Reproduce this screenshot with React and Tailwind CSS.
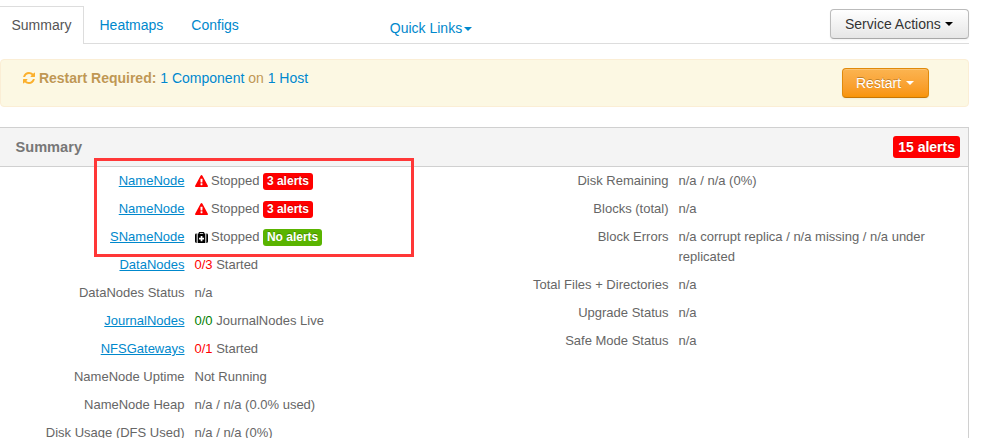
import React from "react";

const Refresh = () => (
  <svg className="inline-block h-3 w-3 fill-[#fbb02d] align-[-1px]" viewBox="0 0 1536 1536">
    <path d="M1511 928q0 5-1 7-64 268-268 434.5T764 1536q-146 0-282.5-55T238 1324l-129 129q-19 19-45 19t-45-19-19-45V960q0-26 19-45t45-19h448q26 0 45 19t19 45-19 45l-137 137q71 66 161 102t187 36q134 0 250-65t186-179q11-17 53-117 8-23 30-23h192q13 0 22.5 9.5t9.5 22.5zm25-800v448q0 26-19 45t-45 19h-448q-26 0-45-19t-19-45 19-45l138-138Q969 256 768 256q-134 0-250 65T332 500q-11 17-53 117-8 23-30 23H50q-13 0-22.5-9.5T18 608v-7q65-268 270-434.5T768 0q146 0 284 55.5T1297 212l130-129q19-19 45-19t45 19 19 45z" />
  </svg>
);

const Warning = () => (
  <svg className="block h-3 w-[13px] fill-[#ff0000]" viewBox="0 0 1792 1664">
    <path d="M1024 1375v-190q0-14-9.5-23.5T992 1152H800q-13 0-22.5 9.5T768 1185v190q0 14 9.5 23.5t22.5 9.5h192q13 0 22.5-9.5t9.5-23.5zm-2-374l18-459q0-12-10-19-13-11-24-11H786q-11 0-24 11-10 7-10 21l17 457q0 10 10 16.5t24 6.5h185q14 0 23.5-6.5t10.5-16.5zm-14-934l768 1408q35 63-2 126-17 29-46.5 46t-63.5 17H128q-34 0-63.5-17T18 1601q-37-63-2-126L784 67q17-31 47-49t65-18 65 18 47 49z" />
  </svg>
);

const Medkit = () => (
  <svg className="block h-[11px] w-[13px] fill-black" viewBox="0 0 13 11">
    <path d="M1.7 1.6v9.4h-.3Q0 11 0 9.6V3Q0 1.6 1.4 1.6zM11.3 1.6v9.4h.3Q13 11 13 9.6V3q0-1.4-1.4-1.4z" />
    <path
      fillRule="evenodd"
      d="M2.7 11V1.6h1V.8q0-.8.8-.8h4q.8 0 .8.8v.8h1V11zM4.8 1v.8h3.4V1zM5.7 4v1.7H4v1.8h1.7v1.7h1.7V7.5H9V5.7H7.4V4z"
    />
  </svg>
);

const Caret = ({ className }) => (
  <span className={`inline-block border-x-4 border-t-4 border-x-transparent ${className}`} />
);

const Badge = ({ className, children }) => (
  <span
    className={`rounded-[3px] font-bold text-white [text-shadow:0_-1px_0_rgba(0,0,0,0.25)] ${className}`}
  >
    {children}
  </span>
);

const Stopped = ({ icon, tone, alerts }) => (
  <div className="flex items-center">
    <span className="w-[16.5px]">{icon}</span>
    <span>Stopped</span>
    <Badge className={`ml-[3.5px] mt-px h-[17px] px-1 text-xs leading-[16px] ${tone}`}>{alerts}</Badge>
  </div>
);

const left = [
  { label: "NameNode", link: true, value: <Stopped icon={<Warning />} tone="bg-[#ff0000]" alerts="3 alerts" /> },
  { label: "NameNode", link: true, value: <Stopped icon={<Warning />} tone="bg-[#ff0000]" alerts="3 alerts" /> },
  { label: "SNameNode", link: true, value: <Stopped icon={<Medkit />} tone="bg-[#5ab400]" alerts="No alerts" /> },
  { label: "DataNodes", link: true, value: <><span className="text-[#ff0000]">0/3</span> Started</> },
  { label: "DataNodes Status", value: "n/a" },
  { label: "JournalNodes", link: true, value: <><span className="text-[#008000]">0/0</span> JournalNodes Live</> },
  { label: "NFSGateways", link: true, value: <><span className="text-[#ff0000]">0/1</span> Started</> },
  { label: "NameNode Uptime", value: "Not Running" },
  { label: "NameNode Heap", value: "n/a / n/a (0.0% used)" },
  { label: "Disk Usage (DFS Used)", value: "n/a / n/a (0%)" },
];

const right = [
  { label: "Disk Remaining", value: "n/a / n/a (0%)" },
  { label: "Blocks (total)", value: "n/a" },
  { label: "Block Errors", value: "n/a corrupt replica / n/a missing / n/a under replicated" },
  { label: "Total Files + Directories", value: "n/a" },
  { label: "Upgrade Status", value: "n/a" },
  { label: "Safe Mode Status", value: "n/a" },
];

const Rows = ({ rows, className }) => (
  <dl className={className}>
    {rows.map((row, i) => (
      <div key={i} className="flex gap-2.5 pb-2">
        <dt className="w-[184.5px] shrink-0 whitespace-nowrap text-right">
          {row.link ? (
            <a href="#" className="text-[#0088cc] underline">{row.label}</a>
          ) : (
            row.label
          )}
        </dt>
        <dd className="min-w-0 flex-1">{row.value}</dd>
      </div>
    ))}
  </dl>
);

export default function App() {
  return (
    <div className="relative h-[438px] w-[985px] overflow-hidden bg-white font-['Liberation_Sans',Arial,sans-serif] text-sm leading-5 text-[#666]">
      <div className="w-[969px]">
        <nav className="flex h-11 items-end border-b border-[#ddd]">
          <div className="-mb-px flex h-[38px] w-[84px] items-center border-r border-t border-[#ddd] bg-white pb-0.5 pl-[11.5px] text-[#555]">
            Summary
          </div>
          <a href="#" className="mb-2 ml-[15.5px] text-[#0088cc]">Heatmaps</a>
          <a href="#" className="mb-2 ml-7 text-[#0088cc]">Configs</a>
          <a href="#" className="mb-[5px] ml-[151px] flex items-center text-[#0088cc]">
            Quick Links
            <Caret className="ml-[1.5px] mt-0.5 border-t-[#0088cc]" />
          </a>
          <button className="mb-1 ml-auto flex h-[30px] w-[139px] items-center rounded border border-[#bbb] border-b-[#a8a8a8] bg-linear-to-b from-white to-[#e6e6e6] pb-px pl-3.5 text-[#333] shadow-[inset_0_1px_0_rgba(255,255,255,0.2),0_1px_2px_rgba(0,0,0,0.05)] [text-shadow:0_1px_1px_rgba(255,255,255,0.75)]">
            Service Actions
            <Caret className="ml-1 border-t-black" />
          </button>
        </nav>

        <div className="mt-[15px] flex h-12 items-start justify-between rounded border border-[#fbeed5] bg-[#fcf8e3] pl-[22px] pr-[39px] pt-2 text-[#c09853] [text-shadow:0_1px_0_rgba(255,255,255,0.5)]">
          <div>
            <Refresh /> <strong>Restart Required:</strong>{" "}
            <a href="#" className="text-[#0088cc]">1 Component</a> on{" "}
            <a href="#" className="text-[#0088cc]">1 Host</a>
          </div>
          <button className="flex h-[30px] w-[87px] items-center rounded border border-[#e08a0b] border-b-[#c67605] bg-linear-to-b from-[#fbb450] to-[#f89406] pb-px pl-[13px] text-white shadow-[inset_0_1px_0_rgba(255,255,255,0.2),0_1px_2px_rgba(0,0,0,0.05)] [text-shadow:0_-1px_0_rgba(0,0,0,0.25)]">
            Restart
            <Caret className="ml-[5px] border-t-white" />
          </button>
        </div>

        <section className="mt-5 h-[340px] border-r border-t border-[#d0d0d0]">
          <header className="flex h-[39px] items-center justify-between border-b border-[#d0d0d0] bg-[#f4f4f4] pl-[15.5px] pr-2">
            <h4 className="text-[14.6px] font-bold text-[#777]">Summary</h4>
            <Badge className="h-[22px] bg-[#ff0000] px-[5px] leading-[22px]">15 alerts</Badge>
          </header>
          <div className="flex pt-1 text-[13px]">
            <Rows rows={left} className="w-[484px]" />
            <Rows rows={right} className="w-[460px]" />
          </div>
        </section>
      </div>

      <div className="pointer-events-none absolute left-[94px] top-[158px] h-[99px] w-80 border-[3px] border-[#ff3737]" />
    </div>
  );
}
